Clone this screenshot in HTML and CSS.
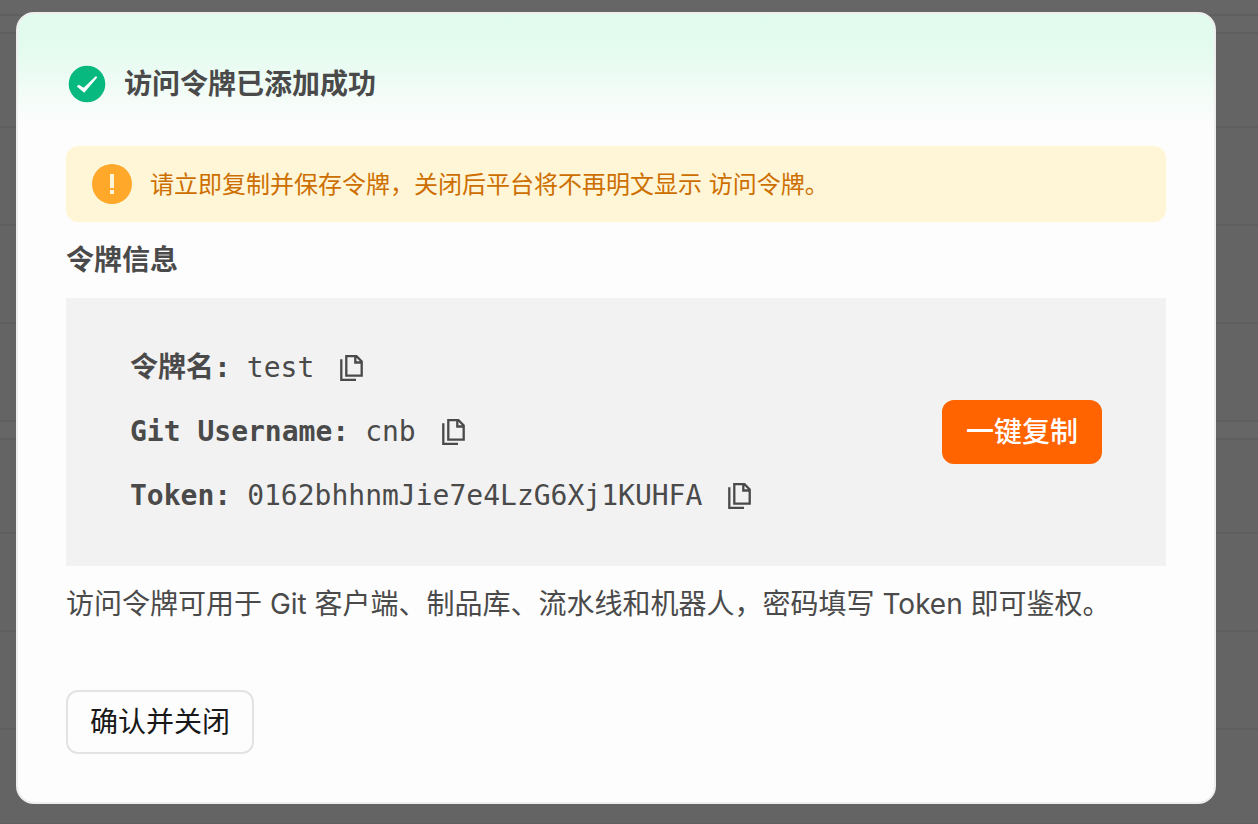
FILE: index.html
```html
<!DOCTYPE html>
<html lang="zh-CN">
<head>
  <meta charset="utf-8" />
  <meta name="viewport" content="width=device-width, initial-scale=1" />
  <title>访问令牌</title>
  <link rel="stylesheet" href="styles.css">
</head>
<body>
<svg class="sprite" aria-hidden="true">
  <symbol id="icon-copy" viewBox="0 0 32 32">
    <path d="M10.300 4.200h10.200l5.200 5.200v14.200H10.300z M19.300 4.200v6.300h6.400 M5.300 7.300v20.500h14.700" fill="none" stroke="currentColor" stroke-width="2.300" />
  </symbol>
</svg>

<div class="page" aria-hidden="true">
  <div class="page-bar"></div>
  <div class="page-list">
    <div class="page-row"></div>
    <div class="page-row"></div>
    <div class="page-row"></div>
    <div class="page-row"></div>
  </div>
  <div class="page-list">
    <div class="page-row"></div>
    <div class="page-row"></div>
    <div class="page-row"></div>
    <div class="page-row page-row--last"></div>
  </div>
</div>

<div class="overlay">
  <div class="dialog" role="dialog" aria-labelledby="dialog-title">
    <h1 class="dialog-title" id="dialog-title">
      <svg class="icon-success" viewBox="0 0 42 42" aria-hidden="true">
        <circle cx="21" cy="21" r="18.3" fill="#07b97e" />
        <path d="M10.800 23.600l1.900-1.900 5 3L30 13l1.200 1.500L18.200 29.800z" fill="#fff" />
      </svg>
      访问令牌已添加成功
    </h1>

    <div class="alert" role="alert">
      <svg class="icon-warning" viewBox="0 0 40 40" aria-hidden="true">
        <circle cx="20" cy="20" r="20" fill="#ffa82a" />
        <path d="M18 10h4v14h-4z M18 26h4v4h-4z" fill="#fff6d7" />
      </svg>
      <span>请立即复制并保存令牌，关闭后平台将不再明文显示 访问令牌。</span>
    </div>

    <h2 class="section-title">令牌信息</h2>
    <div class="token">
      <dl class="token-list">
        <div class="token-row">
          <dt>令牌名:</dt>
          <dd>test</dd>
          <button class="copy" type="button" aria-label="复制令牌名"><svg class="icon-copy"><use href="#icon-copy" /></svg></button>
        </div>
        <div class="token-row">
          <dt>Git Username:</dt>
          <dd>cnb</dd>
          <button class="copy" type="button" aria-label="复制 Git Username"><svg class="icon-copy"><use href="#icon-copy" /></svg></button>
        </div>
        <div class="token-row">
          <dt>Token:</dt>
          <dd>0162bhhnmJie7e4LzG6Xj1KUHFA</dd>
          <button class="copy" type="button" aria-label="复制 Token"><svg class="icon-copy"><use href="#icon-copy" /></svg></button>
        </div>
      </dl>
      <button class="button button--primary" type="button">一键复制</button>
    </div>
    <p class="hint">访问令牌可用于 Git 客户端、制品库、流水线和机器人，密码填写 Token 即可鉴权。</p>

    <button class="button button--default" type="button">确认并关闭</button>
  </div>
</div>
</body>
</html>
```

FILE: styles.css
```css
:root {
  --text: #4a4a4a;
  --surface: #fdfdfd;
  --line: #5f5f5f;
  --sans: Inter, "Noto Sans CJK SC", sans-serif;
  --mono: "DejaVu Sans Mono", "Noto Sans CJK SC", monospace;
}
* {
  box-sizing: border-box;
}
body {
  margin: 0;
  background: #666;
  color: var(--text);
  font-family: var(--sans);
  font-size: 28px;
  line-height: 44px;
}
h1, h2, p, dl, dd {
  margin: 0;
}
button {
  font: inherit;
  cursor: pointer;
}
.sprite {
  display: none;
}

/* dimmed list behind the dialog */
.page {
  height: 100vh;
  overflow: hidden;
}
.page-bar {
  height: 16px;
  border-bottom: 2px solid var(--line);
}
.page-list {
  margin-top: 16px;
  border-top: 2px solid var(--line);
  background: #646464;
}
.page-row {
  height: 98px;
  border-bottom: 2px solid var(--line);
}
.page-row:first-child {
  height: 94px;
}
.page-row--last {
  height: 95px;
}

.overlay {
  position: absolute;
  top: 0;
  left: 0;
  width: 100%;
  padding: 12px 42px 20px 16px;
}
.dialog {
  padding: 48px;
  border: 2px solid #eee;
  border-radius: 18px;
  background: var(--surface) linear-gradient(#e1fbee, #e2fbee 28px, var(--surface) 112px) no-repeat;
}
.dialog-title {
  display: flex;
  align-items: center;
  gap: 16px;
  margin-bottom: 40px;
  font-size: 28px;
  font-weight: 600;
}
.icon-success {
  width: 42px;
  height: 42px;
}

.alert {
  display: flex;
  align-items: center;
  gap: 18px;
  padding: 16px 26px;
  border-radius: 12px;
  background: #fff6d7;
  color: #cd6f00;
  font-size: 24px;
}
.alert span {
  padding-top: 2px;
  line-height: 42px;
}
.icon-warning {
  flex: none;
  width: 40px;
  height: 40px;
}

.section-title {
  margin: 16px 0;
  font-size: 28px;
  font-weight: 600;
}
.token {
  display: flex;
  align-items: center;
  justify-content: space-between;
  padding: 38px 64px;
  background: #f2f2f2;
}
.token-list {
  font-family: var(--mono);
}
.token-row {
  display: flex;
  align-items: center;
  height: 64px;
}
.token-row dt {
  margin-right: 16px;
  font-weight: 700;
}
.copy {
  display: flex;
  margin-left: 22px;
  padding: 0;
  border: 0;
  background: none;
  color: inherit;
}
.icon-copy {
  width: 32px;
  height: 32px;
}

.hint {
  margin: 16px 0 64px;
}
.button {
  height: 64px;
  padding: 0 22px;
  border: 2px solid transparent;
  border-radius: 12px;
}
.button--primary {
  border-color: #ff6400;
  background: #ff6400;
  color: #fff;
  font-weight: 500;
}
.button--default {
  border-color: #e3e3e3;
  background: var(--surface);
  color: #181818;
}
```
